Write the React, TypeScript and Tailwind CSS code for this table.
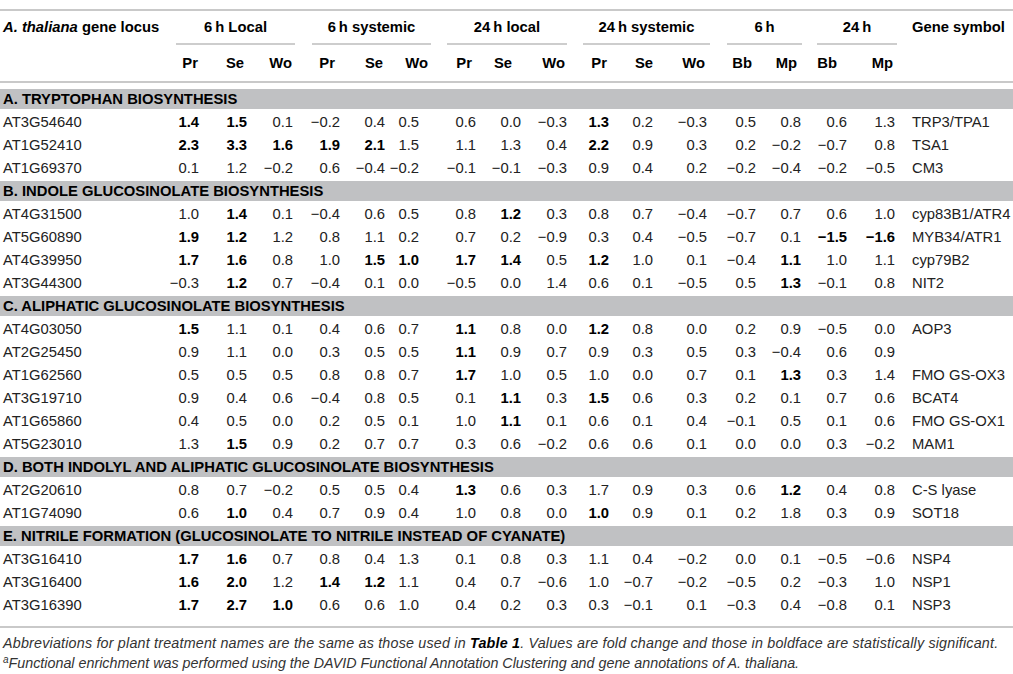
import React from "react";

const COLS =
  "grid grid-cols-[165px_34px_48px_46px_47px_45px_34px_57px_45px_46px_42px_44px_54px_49px_45px_46px_48px_1fr]";

type Row = { locus: string; v: string[]; gene: string };
type Section = { title: string; rows: Row[] };

const r = (locus: string, vals: string, gene: string): Row => ({
  locus,
  v: vals.split(" ").map((s) => s.replace(/-/g, "\u2212")),
  gene,
});

const sections: Section[] = [
  {
    title: "A. TRYPTOPHAN BIOSYNTHESIS",
    rows: [
      r("AT3G54640", "*1.4 *1.5 0.1 -0.2 0.4 0.5 0.6 0.0 -0.3 *1.3 0.2 -0.3 0.5 0.8 0.6 1.3", "TRP3/TPA1"),
      r("AT1G52410", "*2.3 *3.3 *1.6 *1.9 *2.1 1.5 1.1 1.3 0.4 *2.2 0.9 0.3 0.2 -0.2 -0.7 0.8", "TSA1"),
      r("AT1G69370", "0.1 1.2 -0.2 0.6 -0.4 -0.2 -0.1 -0.1 -0.3 0.9 0.4 0.2 -0.2 -0.4 -0.2 -0.5", "CM3"),
    ],
  },
  {
    title: "B. INDOLE GLUCOSINOLATE BIOSYNTHESIS",
    rows: [
      r("AT4G31500", "1.0 *1.4 0.1 -0.4 0.6 0.5 0.8 *1.2 0.3 0.8 0.7 -0.4 -0.7 0.7 0.6 1.0", "cyp83B1/ATR4"),
      r("AT5G60890", "*1.9 *1.2 1.2 0.8 1.1 0.2 0.7 0.2 -0.9 0.3 0.4 -0.5 -0.7 0.1 *-1.5 *-1.6", "MYB34/ATR1"),
      r("AT4G39950", "*1.7 *1.6 0.8 1.0 *1.5 *1.0 *1.7 *1.4 0.5 *1.2 1.0 0.1 -0.4 *1.1 1.0 1.1", "cyp79B2"),
      r("AT3G44300", "-0.3 *1.2 0.7 -0.4 0.1 0.0 -0.5 0.0 1.4 0.6 0.1 -0.5 0.5 *1.3 -0.1 0.8", "NIT2"),
    ],
  },
  {
    title: "C. ALIPHATIC GLUCOSINOLATE BIOSYNTHESIS",
    rows: [
      r("AT4G03050", "*1.5 1.1 0.1 0.4 0.6 0.7 *1.1 0.8 0.0 *1.2 0.8 0.0 0.2 0.9 -0.5 0.0", "AOP3"),
      r("AT2G25450", "0.9 1.1 0.0 0.3 0.5 0.5 *1.1 0.9 0.7 0.9 0.3 0.5 0.3 -0.4 0.6 0.9", ""),
      r("AT1G62560", "0.5 0.5 0.5 0.8 0.8 0.7 *1.7 1.0 0.5 1.0 0.0 0.7 0.1 *1.3 0.3 1.4", "FMO GS-OX3"),
      r("AT3G19710", "0.9 0.4 0.6 -0.4 0.8 0.5 0.1 *1.1 0.3 *1.5 0.6 0.3 0.2 0.1 0.7 0.6", "BCAT4"),
      r("AT1G65860", "0.4 0.5 0.0 0.2 0.5 0.1 1.0 *1.1 0.1 0.6 0.1 0.4 -0.1 0.5 0.1 0.6", "FMO GS-OX1"),
      r("AT5G23010", "1.3 *1.5 0.9 0.2 0.7 0.7 0.3 0.6 -0.2 0.6 0.6 0.1 0.0 0.0 0.3 -0.2", "MAM1"),
    ],
  },
  {
    title: "D. BOTH INDOLYL AND ALIPHATIC GLUCOSINOLATE BIOSYNTHESIS",
    rows: [
      r("AT2G20610", "0.8 0.7 -0.2 0.5 0.5 0.4 *1.3 0.6 0.3 1.7 0.9 0.3 0.6 *1.2 0.4 0.8", "C-S lyase"),
      r("AT1G74090", "0.6 *1.0 0.4 0.7 0.9 0.4 1.0 0.8 0.0 *1.0 0.9 0.1 0.2 1.8 0.3 0.9", "SOT18"),
    ],
  },
  {
    title: "E. NITRILE FORMATION (GLUCOSINOLATE TO NITRILE INSTEAD OF CYANATE)",
    rows: [
      r("AT3G16410", "*1.7 *1.6 0.7 0.8 0.4 1.3 0.1 0.8 0.3 1.1 0.4 -0.2 0.0 0.1 -0.5 -0.6", "NSP4"),
      r("AT3G16400", "*1.6 *2.0 1.2 *1.4 *1.2 1.1 0.4 0.7 -0.6 1.0 -0.7 -0.2 -0.5 0.2 -0.3 1.0", "NSP1"),
      r("AT3G16390", "*1.7 *2.7 *1.0 0.6 0.6 1.0 0.4 0.2 0.3 0.3 -0.1 0.1 -0.3 0.4 -0.8 0.1", "NSP3"),
    ],
  },
];

const subHeads: { label: string; cls: string }[] = [
  { label: "Pr", cls: "pr-[1px]" },
  { label: "Se", cls: "pr-[3px]" },
  { label: "Wo", cls: "pr-[1px]" },
  { label: "Pr", cls: "pr-[5px]" },
  { label: "Se", cls: "pr-[2px]" },
  { label: "Wo", cls: "-mr-[9px]" },
  { label: "Pr", cls: "pr-[4px]" },
  { label: "Se", cls: "pr-[9px]" },
  { label: "Wo", cls: "pr-[2px]" },
  { label: "Pr", cls: "pr-[2px]" },
  { label: "Se", cls: "pr-0" },
  { label: "Wo", cls: "pr-[2px]" },
  { label: "Bb", cls: "pr-[4px]" },
  { label: "Mp", cls: "pr-[4px]" },
  { label: "Bb", cls: "pr-[10px]" },
  { label: "Mp", cls: "pr-[2px]" },
];

const groups: { label: string; cls: string }[] = [
  { label: "6\u2009h Local", cls: "col-span-3 ml-[11px] -mr-[2px]" },
  { label: "6\u2009h systemic", cls: "col-span-3 ml-[19px] -mr-[12px]" },
  { label: "24\u2009h local", cls: "col-span-3 ml-[28px] mr-0" },
  { label: "24\u2009h systemic", cls: "col-span-3 ml-[16px] -mr-[3px]" },
  { label: "6\u2009h", cls: "col-span-2 ml-[20px] -mr-[1px]" },
  { label: "24\u2009h", cls: "col-span-2 ml-[16px] -mr-[2px]" },
];

function DataRow({ row }: { row: Row }) {
  return (
    <div className={`${COLS} h-[23px] items-center`}>
      <div className="pl-[3px]">{row.locus}</div>
      {row.v.map((val, i) => {
        const bold = val.startsWith("*");
        return (
          <div
            key={i}
            className={`text-right whitespace-nowrap ${bold ? "font-bold text-black" : ""}`}
          >
            {bold ? val.slice(1) : val}
          </div>
        );
      })}
      <div className="pl-[17px] whitespace-nowrap">{row.gene}</div>
    </div>
  );
}

export default function App() {
  return (
    <div
      className="w-[1013px] h-[674px] bg-white overflow-hidden text-[14.8px] leading-[17px] text-[#222]"
      style={{ fontFamily: '"Liberation Sans", Arial, sans-serif' }}
    >
      <div className="pt-[9px]">
        <div className="border-t-2 border-[#c9c9c9]" />
        {/* group header */}
        <div className={`${COLS} h-[34px] font-bold text-black`}>
          <div className="pl-[3px] flex items-center pb-[2px] whitespace-nowrap">
            <span>
              <i>A. thaliana</i> gene locus
            </span>
          </div>
          {groups.map((g, i) => (
            <div
              key={i}
              className={`${g.cls} flex items-center justify-center border-b-2 border-[#cdcdcd] whitespace-nowrap`}
            >
              {g.label}
            </div>
          ))}
          <div className="pl-[17px] flex items-center pb-[2px] whitespace-nowrap">
            Gene symbol
          </div>
        </div>
        {/* sub header */}
        <div className={`${COLS} h-[36px] items-center font-bold text-black`}>
          <div />
          {subHeads.map((s, i) => (
            <div key={i} className={`text-right ${s.cls}`}>
              {s.label}
            </div>
          ))}
          <div />
        </div>
        <div className="border-t-2 border-[#c9c9c9]" />
        <div className="h-[5px]" />
        {sections.map((sec) => (
          <div key={sec.title}>
            <div className="h-[23px] pt-[1px] pb-[2px]">
              <div className="h-full bg-[#c0c1c3] flex items-center pl-[3px] font-bold text-black whitespace-nowrap">
                {sec.title}
              </div>
            </div>
            {sec.rows.map((row) => (
              <DataRow key={row.locus} row={row} />
            ))}
          </div>
        ))}
        <div className="mt-[9px] border-t-2 border-[#c9c9c9]" />
        <div className="pt-[5px] pl-[3px] text-[14.3px] leading-[20px] italic text-[#333] whitespace-nowrap">
          <div className="tracking-[0.2px]">
            Abbreviations for plant treatment names are the same as those used in{" "}
            <b className="text-black">Table 1</b>. Values are fold change and those in boldface
            are statistically significant.
          </div>
          <div>
            <sup className="text-[10px]">a</sup>Functional enrichment was performed using the
            DAVID Functional Annotation Clustering and gene annotations of A. thaliana.
          </div>
        </div>
      </div>
    </div>
  );
}
